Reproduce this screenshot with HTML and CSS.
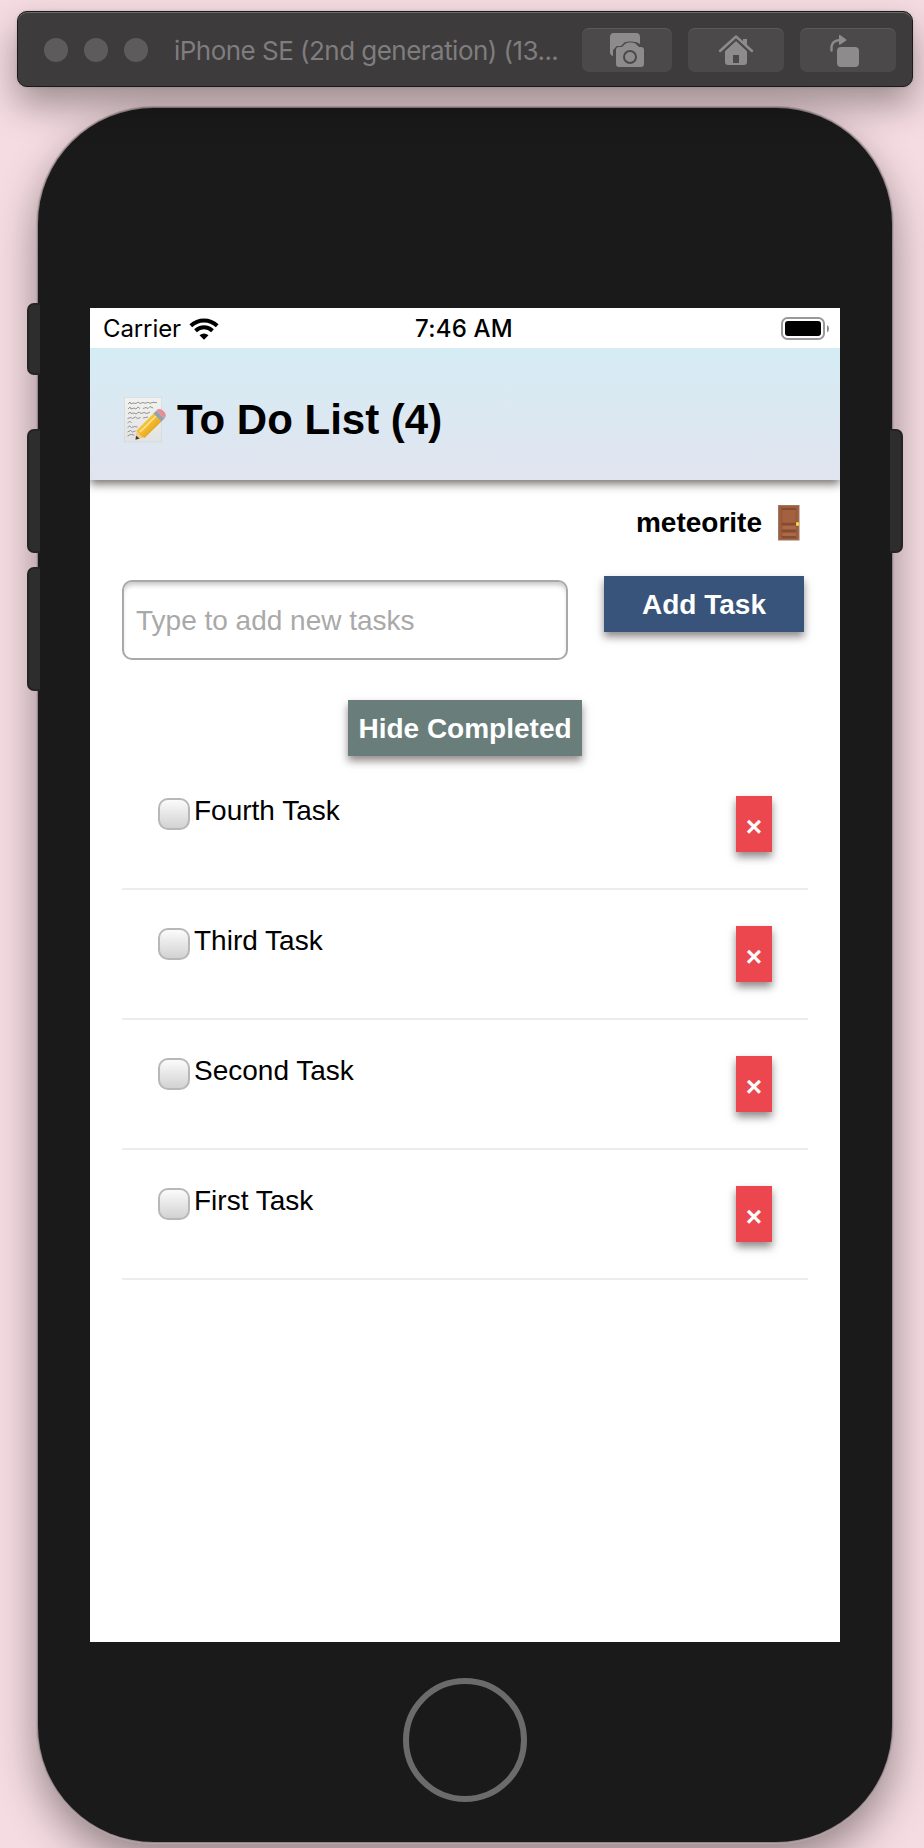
FILE: index.html
```html
<!DOCTYPE html>
<html lang="en">
<head>
<meta charset="utf-8">
<title>To Do List</title>
<link rel="stylesheet" href="styles.css">
</head>
<body>
<header class="titlebar">
  <div class="lights"><i class="light"></i><i class="light"></i><i class="light"></i></div>
  <div class="title">iPhone SE (2nd generation) (13...</div>
  <div class="tool tool-shot">
    <svg viewBox="0 0 90 44" width="90" height="44">
      <path class="ic" d="M32 5h22a4 4 0 0 1 4 4v7l-4-2H43l-4 4h-4l-4 4v6a4 4 0 0 1-3-4V9a4 4 0 0 1 4-4z"/>
      <path class="ic cut" d="M37 19h3l3-3q1.500-1.500 4-1.500h3q2.500 0 4 1.500l3 3h2a3 3 0 0 1 3 3v14a3 3 0 0 1-3 3H37a3 3 0 0 1-3-3V22a3 3 0 0 1 3-3z"/>
      <circle cx="48" cy="29" r="6" fill="none" stroke="#4b494a" stroke-width="2"/>
    </svg>
  </div>
  <div class="tool tool-home">
    <svg viewBox="0 0 96 44" width="96" height="44">
      <path class="ic" d="M55 11h4v9l-4-4z"/>
      <path class="ic" fill-rule="evenodd" d="M48 12.500 59 22.500V34a3 3 0 0 1-3 3H40a3 3 0 0 1-3-3V22.500zM45 27v8h6v-8z"/>
      <path d="M32 23 48 8.500 64 23" fill="none" stroke="#8d8b8c" stroke-width="2.400" stroke-linecap="round" stroke-linejoin="round"/>
      <path d="M35.500 23.500 48 12 60.500 23.500" fill="none" stroke="#4b494a" stroke-width="1.600"/>
    </svg>
  </div>
  <div class="tool tool-rotate">
    <svg viewBox="0 0 96 44" width="96" height="44">
      <path d="M31.500 22.500v-4q1-6 8.500-6.500" fill="none" stroke="#8d8b8c" stroke-width="2.400" stroke-linecap="round"/>
      <path class="ic" d="M39 7.500q0-1 1-.5l6 4.300q.7.700 0 1.400l-6 4q-1 .5-1-.5z"/>
      <rect class="ic" x="37" y="19" width="22" height="20" rx="4"/>
    </svg>
  </div>
</header>

<main class="phone">
  <i class="side mute"></i><i class="side vol-up"></i><i class="side vol-down"></i><i class="side power"></i>
  <section class="screen">
    <div class="status">
      <div class="carrier">
        <span>Carrier</span>
        <svg viewBox="0 0 30 22" width="30" height="22">
          <g fill="none" stroke="#000" stroke-width="4">
            <path d="M1.800 7.800Q7.500 2.600 15 2.600T28.200 7.800"/>
            <path d="M6.500 12.800Q10.300 9.300 15 9.300T23.500 12.800"/>
          </g>
          <path d="M10.500 17.300Q15 13.500 19.500 17.300L15 21.800z"/>
        </svg>
      </div>
      <div class="clock">7:46 AM</div>
      <div class="battery">
        <svg viewBox="0 0 48 24" width="48" height="24">
          <rect x="1" y="1" width="42" height="21" rx="5.500" fill="#fff" stroke="#999" stroke-width="2"/>
          <rect x="4" y="4" width="36" height="15" rx="3"/>
          <path d="M46 8v7.500q2-1.200 2-3.700T46 8z" fill="#888"/>
        </svg>
      </div>
    </div>

    <div class="app-header">
      <svg class="memo" viewBox="0 0 44 48" width="44" height="48">
        <defs>
          <linearGradient id="paper" x2="0" y2="1"><stop stop-color="#f2f2f0"/><stop offset="1" stop-color="#e1e2e3"/></linearGradient>
          <linearGradient id="wood" x2="1" y2="1"><stop stop-color="#ffdc63"/><stop offset=".5" stop-color="#f3b92e"/><stop offset="1" stop-color="#c98712"/></linearGradient>
        </defs>
        <rect x="1.500" y="1.500" width="37" height="44.500" fill="url(#paper)" stroke="#d3d5d6" stroke-width=".6"/>
        <g fill="none" stroke="#8a8a8a" stroke-width=".9">
          <path d="M5 8l2-2 1 2 2-1 3 .5 2-1.500 2 1.500 3-1 2 .8 3-1 2 1 3-1 4 .4"/>
          <path d="M5 13l2-2 1 2 3-1 2 1 2-2 2 1.500M20 12.500l3-1 2 1 2-2 3 1.500"/>
          <path d="M5 18l2-2 1 1.500 3-.5 2 1 3-2 2 1.500 3-1 3 1 3-1.500"/>
          <path d="M4.500 22.500l3-1 2 1 3-1.500 2 1.500 3-1M20 22l5-1"/>
          <path d="M4.500 27l2-1.500 2 1M4.500 31.500l2-1.500 2 1.500 3-1 3 .5M4.500 36l3-1.500 2 1.500 3-1M4.500 40l3-1.500 4 .5"/>
        </g>
        <path d="M12.500 43.800 13.500 34 21.500 41.500z" fill="#eecb8e"/>
        <path d="M12.500 43.800l.5-4 3.600 2.800z" fill="#333"/>
        <path d="M13.500 34.500 31 17 39 25 21.500 42 17.500 39.500z" fill="url(#wood)"/>
        <path d="M17 36 33 20" stroke="#ffe68a" stroke-width="1.600"/>
        <path d="M30.500 17.500l3-3 8 8-3 3z" fill="#8fa3b3"/>
        <path d="M33.500 14.500q3-3 7 .5t1 7.500z" fill="#ea8b91"/>
      </svg>
      <h1>To Do List (4)</h1>
    </div>

    <div class="user">
      <span class="name">meteorite</span>
      <svg viewBox="0 0 22 36" width="22" height="36">
        <rect x=".5" y=".5" width="20.500" height="34.500" fill="#a05c3d" stroke="#9c7963"/>
        <rect x="3" y="3" width="15.500" height="31" fill="#99583a"/>
        <path d="M3.500 4H18M3.500 19H18M3.500 26H18M4 32H18" stroke="#7d4830" stroke-width="1.400"/>
        <rect x="4.500" y="5" width="13" height="12.500" fill="#a4613f"/>
        <path d="M4.500 22.500H18M4.500 29.500H18" stroke="#aa6947" stroke-width="3"/>
        <path d="M18 17h3v4h-3z" fill="#d9b62c"/>
        <circle cx="19.500" cy="19" r="1.200" fill="#ffe25a"/>
      </svg>
    </div>

    <div class="add-form">
      <div class="field">Type to add new tasks</div>
      <div class="btn add">Add Task</div>
    </div>
    <div class="filter"><div class="btn hide">Hide Completed</div></div>

    <ul class="tasks">
      <li class="task"><i class="box"></i><span class="label">Fourth Task</span><div class="btn del">×</div></li>
      <li class="task"><i class="box"></i><span class="label">Third Task</span><div class="btn del">×</div></li>
      <li class="task"><i class="box"></i><span class="label">Second Task</span><div class="btn del">×</div></li>
      <li class="task"><i class="box"></i><span class="label">First Task</span><div class="btn del">×</div></li>
    </ul>
  </section>
  <div class="home"></div>
</main>
</body>
</html>
```

FILE: styles.css
```css
* { box-sizing: border-box; }
html, body { height: 1848px; overflow: hidden; }
body {
  margin: 0;
  padding-top: 11px;
  background: #f5dce2;
  font-family: "Liberation Sans", Arial, sans-serif;
  color: #000;
}
svg { display: block; flex: none; }

.titlebar {
  position: relative;
  z-index: 1;
  display: flex;
  align-items: center;
  width: 896px;
  height: 76px;
  margin-left: 17px;
  padding: 2px 16px 0 26px;
  border: 1px solid #1b1a1a;
  border-radius: 10px;
  background: #3d3b3c;
  box-shadow: inset 0 1px 0 #6c6a6b, 0 18px 36px rgba(0, 0, 0, .36), 0 0 3px rgba(0, 0, 0, .15);
}
.lights { display: flex; gap: 16px; }
.light { width: 24px; height: 24px; border-radius: 50%; background: #5d5b5c; }
.title {
  width: 408px;
  margin-left: 26px;
  padding-top: 2px;
  font: 400 26px/32px Inter, sans-serif;
  letter-spacing: -.53px;
  color: #7f7d7e;
  white-space: nowrap;
}
.tool {
  height: 44px;
  border-radius: 7px;
  background: #4b494a;
  box-shadow: inset 0 1px 0 #5c5a5b;
}
.tool-shot { width: 90px; margin-left: auto; }
.tool-home { width: 96px; margin-left: 16px; }
.tool-rotate { width: 96px; margin-left: 16px; }
.ic { fill: #8d8b8c; }
.cut { stroke: #4b494a; stroke-width: 2px; paint-order: stroke; }

.phone {
  position: relative;
  width: 854px;
  height: 1734px;
  margin: 21px 0 0 38px;
  padding: 200px 0 0 52px;
  border-radius: 116px;
  background: #1a1a1a;
  box-shadow: 0 0 0 1px #93858a, 0 0 0 2px #b9a6ac, 0 18px 44px rgba(0, 0, 0, .42);
}
.side {
  position: absolute;
  left: -11px;
  width: 13px;
  border: 2px solid #252324;
  border-right: 0;
  border-radius: 7px 0 0 7px;
  background: #2d2d2d;
}
.mute { top: 195px; height: 72px; }
.vol-up { top: 321px; height: 124px; }
.vol-down { top: 459px; height: 124px; }
.power { top: 321px; left: auto; right: -11px; height: 124px; transform: scaleX(-1); }

.screen { width: 750px; height: 1334px; background: #fff; }
.status {
  display: grid;
  grid-template-columns: 1fr auto 1fr;
  align-items: center;
  height: 40px;
  padding: 0 11px 0 13px;
  font: 400 24px/40px Inter, sans-serif;
}
.carrier { display: flex; align-items: center; gap: 8px; padding-top: 1px; letter-spacing: -.1px; }
.clock { margin: 0 4px 0 0; font-weight: 500; padding-top: 1px; letter-spacing: .2px; }
.battery { justify-self: end; }

.app-header {
  display: flex;
  height: 132px;
  padding: 48px 0 0 33px;
  background: linear-gradient(#d5ecf4, #e1e4ef);
  box-shadow: 0 4px 9px rgba(35, 25, 25, .62);
  clip-path: inset(0 0 -20px 0);
}
h1 { margin: 0 0 0 10px; font-size: 42px; line-height: 48px; white-space: nowrap; }

.user {
  display: flex;
  justify-content: flex-end;
  padding: 25px 40px 0 0;
  gap: 16px;
  font: bold 28px/35px "Liberation Sans", sans-serif;
}
.add-form {
  display: flex;
  justify-content: space-between;
  padding: 35px 36px 0 32px;
}
.field {
  width: 446px;
  height: 80px;
  margin-top: 4px;
  padding-left: 12px;
  border: 2px solid #a9a9a9;
  border-radius: 10px;
  box-shadow: inset 0 5px 5px -2px rgba(0, 0, 0, .22);
  font-size: 28px;
  line-height: 77px;
  color: #a9a9a9;
}
.btn {
  height: 56px;
  color: #fff;
  font: bold 28px/58px "Liberation Sans", sans-serif;
  text-align: center;
  white-space: nowrap;
  box-shadow: 0 5px 8px rgba(35, 25, 25, .5);
}
.add { width: 200px; background: #39547b; }
.filter { display: flex; justify-content: center; padding-top: 40px; }
.hide { width: 234px; background: #697e7b; }

.tasks { margin: 4px 32px 0; padding: 0; list-style: none; }
.task {
  display: flex;
  align-items: flex-start;
  width: 686px;
  height: 130px;
  padding: 36px 36px 0;
  border-bottom: 2px solid #ededed;
}
.box {
  width: 32px;
  height: 32px;
  margin-top: 2px;
  border: 2px solid #b8b8b8;
  border-radius: 10px;
  background: linear-gradient(#fbfbfb, #d2d2d2);
}
.label { flex: 1; margin-left: 4px; font-size: 28px; line-height: 30px; }
.del { width: 36px; background: #ec464e; line-height: 61px; }

.home {
  width: 124px;
  height: 124px;
  margin: 36px 0 0 313px;
  border: 6px solid #6b6b6b;
  border-radius: 50%;
}
```
